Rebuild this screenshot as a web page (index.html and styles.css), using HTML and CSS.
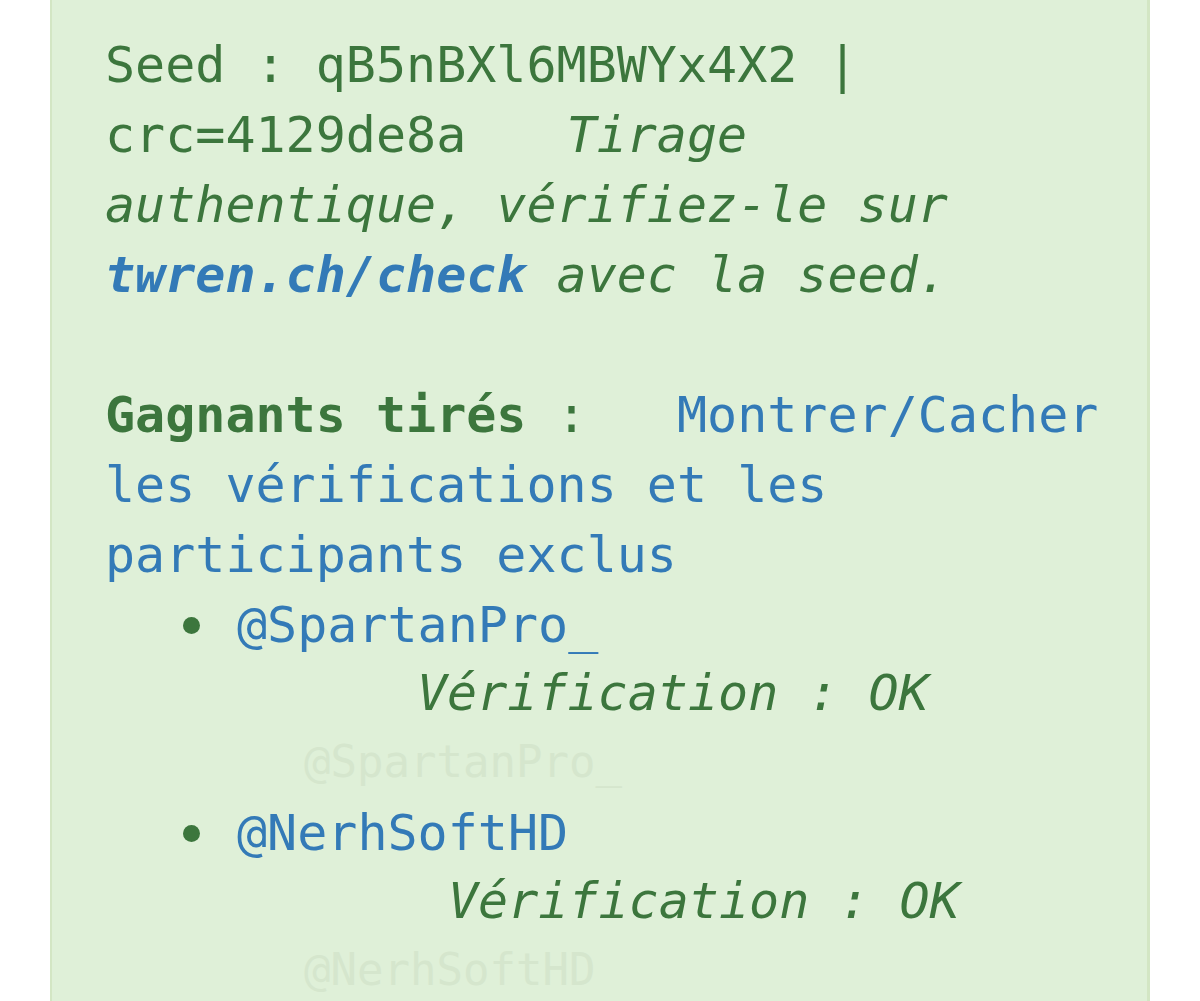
FILE: index.html
```html
<!DOCTYPE html>
<html lang="fr">
<head>
<meta charset="utf-8">
<title>Tirage</title>
<link rel="stylesheet" href="styles.css">
</head>
<body>
<div class="alert">
  <p class="seed">Seed : qB5nBXl6MBWYx4X2 | crc=4129de8a&nbsp;&nbsp; <em class="note">Tirage authentique, vérifiez-le sur <a class="check" href="#">twren.ch/check</a> avec la seed.</em></p>
  <p class="winners"><strong>Gagnants tirés</strong> :&nbsp;&nbsp; <a class="toggle" href="#">Montrer/Cacher les vérifications et les participants exclus</a></p>
  <ul class="list">
    <li>
      <a class="user" href="#">@SpartanPro_</a>
      <div class="verif verif-6"><em>Vérification : OK</em></div>
      <div class="ghost">@SpartanPro_</div>
    </li>
    <li>
      <a class="user" href="#">@NerhSoftHD</a>
      <div class="verif verif-7"><em>Vérification : OK</em></div>
      <div class="ghost">@NerhSoftHD</div>
    </li>
  </ul>
</div>
</body>
</html>
```
FILE: styles.css
```css
html, body {
  margin: 0;
  padding: 0;
  background: #ffffff;
}

body {
  font-family: "DejaVu Sans Mono", "Liberation Mono", monospace;
  font-size: 50px;
  line-height: 70px;
  color: #3c763d;
  overflow: hidden;
}

.alert {
  margin: 0 50px;
  padding: 30px 30px 40px 53px;
  background: #dff0d8;
  border-left: 2px solid #d3e6c4;
  border-right: 3px solid #d3e6c4;
  min-height: 1100px;
}

p {
  margin: 0;
}

.seed {
  margin-bottom: 70px;
}

.note {
  padding-left: 10px;
}

a {
  color: #337ab7;
  text-decoration: none;
}

.check {
  font-weight: bold;
}

.winners strong {
  font-weight: bold;
}

.list {
  margin: 0;
  padding: 0 0 0 132px;
  list-style: none;
}

.list li {
  position: relative;
  margin: 0;
}

.list li::before {
  content: "";
  position: absolute;
  left: -54px;
  top: 27px;
  width: 17px;
  height: 17px;
  border-radius: 50%;
  background: #3c763d;
}

.user {
  display: inline-block;
  line-height: 70px;
}

.verif {
  line-height: 66px;
}

.verif-6 {
  padding-left: 180px;
}

.verif-7 {
  padding-left: 211px;
}

.ghost {
  font-size: 44px;
  line-height: 72px;
  padding-left: 67px;
  color: #d5e6cd;
}
```
